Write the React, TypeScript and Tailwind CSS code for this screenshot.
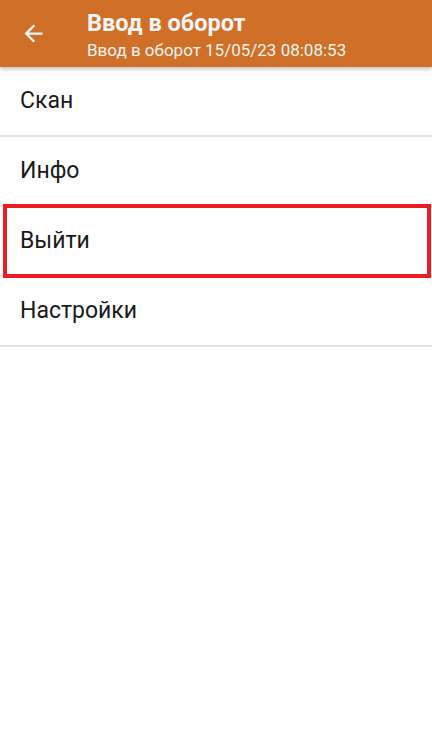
import React from "react";

const items = ["Скан", "Инфо", "Выйти", "Настройки"];

function Header() {
  return (
    <header className="h-[67px] w-full flex items-center bg-[#d07028] shadow-[0_2px_4px_rgba(0,0,0,0.25)] relative z-10">
      <div className="w-[87px] flex justify-center pr-[20px]">
        <svg width="27" height="27" viewBox="0 0 24 24" fill="#f4f4f4">
          <path d="M20 11H7.83l5.59-5.59L12 4l-8 8 8 8 1.41-1.41L7.83 13H20v-2z" />
        </svg>
      </div>
      <div className="flex flex-col text-[#f4f4f4] leading-none pt-[4px]">
        <h1 className="text-[23.5px] font-bold">Ввод в оборот</h1>
        <p className="text-[17px] mt-[6px]">Ввод в оборот 15/05/23 08:08:53</p>
      </div>
    </header>
  );
}

function App() {
  return (
    <div className="w-[432px] h-[739px] bg-white overflow-hidden font-['Roboto',sans-serif]">
      <Header />
      <ul>
        {items.map((item) => (
          <li
            key={item}
            className="h-[70px] flex items-center px-5 text-[23px] text-[#1a1a1a] border-b-2 border-[#e4e4e4] relative"
          >
            {item}
            {item === "Выйти" && (
              <div className="absolute left-[3px] right-[1px] top-[-3px] bottom-[-3px] border-4 border-[#ed1c24]" />
            )}
          </li>
        ))}
      </ul>
    </div>
  );
}

export default App;
